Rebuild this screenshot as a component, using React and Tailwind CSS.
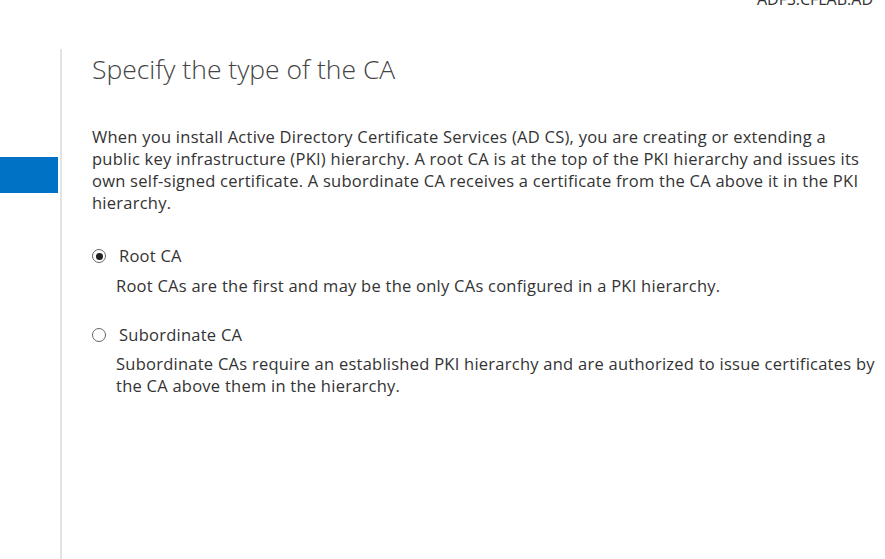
export default function App() {
  const font = { fontFamily: '"Open Sans", "Noto Sans", sans-serif' }
  return (
    <div className="w-[885px] h-[559px] bg-white overflow-hidden flex flex-col text-[#333]" style={font}>
      {/* server name, cut off at top */}
      <div className="flex justify-end pr-[12px] h-[49px]">
        <span className="text-[16px] leading-[20px] -mt-[11px] text-[#333]">ADFS.CFLAB.AD</span>
      </div>
      <div className="flex flex-1">
        {/* left nav */}
        <div className="w-[60px] pt-[108px]">
          <div className="w-[58px] h-[36px] bg-[#0072c6]" />
        </div>
        <div className="w-[2px] bg-[#e3e3e3]" />
        {/* main */}
        <div className="flex-1 pl-[30px] pt-[2px]">
          <h1 className="text-[26.5px] leading-[36px] font-light text-[#444]">Specify the type of the CA</h1>
          <p className="mt-[39px] text-[16.5px] leading-[22px] tracking-[0.25px] whitespace-nowrap">
            When you install Active Directory Certificate Services (AD CS), you are creating or extending a<br />
            public key infrastructure (PKI) hierarchy. A root CA is at the top of the PKI hierarchy and issues its<br />
            own self-signed certificate. A subordinate CA receives a certificate from the CA above it in the PKI<br />
            hierarchy.
          </p>
          <div className="mt-[31px] flex flex-col gap-[27px] text-[16.5px] leading-[22px] tracking-[0.25px] whitespace-nowrap">
            <div>
              <label className="flex items-center gap-[13px]">
                <span className="w-[14px] h-[14px] rounded-full border border-[#666] flex items-center justify-center">
                  <span className="w-[7px] h-[7px] rounded-full bg-[#222]" />
                </span>
                <span>Root CA</span>
              </label>
              <p className="pl-[24px] mt-[8px]">Root CAs are the first and may be the only CAs configured in a PKI hierarchy.</p>
            </div>
            <div>
              <label className="flex items-center gap-[13px]">
                <span className="w-[14px] h-[14px] rounded-full border border-[#666]" />
                <span>Subordinate CA</span>
              </label>
              <p className="pl-[24px] mt-[7px]">
                Subordinate CAs require an established PKI hierarchy and are authorized to issue certificates by<br />
                the CA above them in the hierarchy.
              </p>
            </div>
          </div>
        </div>
      </div>
    </div>
  )
}
